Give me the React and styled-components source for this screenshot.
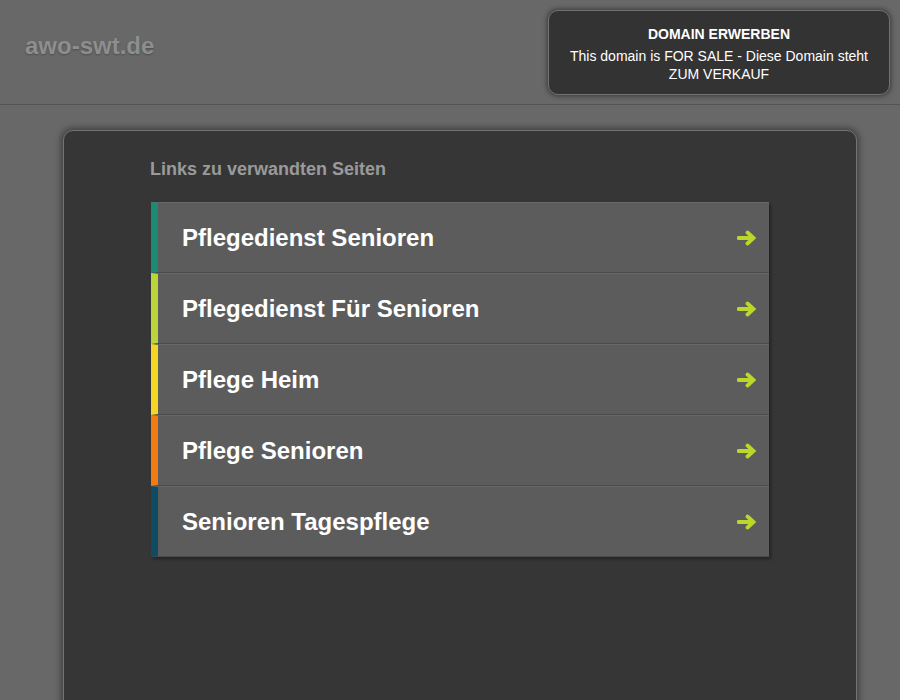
import React from "react";
import styled, { createGlobalStyle } from "styled-components";

const links = [
  { label: "Pflegedienst Senioren", color: "#1b8b73" },
  { label: "Pflegedienst Für Senioren", color: "#b9d53a" },
  { label: "Pflege Heim", color: "#f4d623" },
  { label: "Pflege Senioren", color: "#f27c12" },
  { label: "Senioren Tagespflege", color: "#0f4b62" },
];

const GlobalStyle = createGlobalStyle`
  html, body {
    margin: 0;
    padding: 0;
    background: #686868;
    font-family: "Liberation Sans", Arial, sans-serif;
  }
`;

const Header = styled.header`
  display: flex;
  justify-content: space-between;
  align-items: flex-start;
  height: 105px;
  padding: 10px 10px 0 25px;
  box-sizing: border-box;
  border-bottom: 1px solid #545454;
`;

const Logo = styled.div`
  margin-top: 22px;
  font-size: 24px;
  line-height: 28px;
  font-weight: bold;
  color: #8e8e8e;
  text-shadow: 0 1px 2px rgba(0, 0, 0, 0.25);
`;

const SaleBox = styled.div`
  width: 342px;
  height: 85px;
  box-sizing: border-box;
  padding: 14px 10px 0;
  background: #333334;
  border: 1px solid #727272;
  border-radius: 10px;
  box-shadow: 0 0 5px 1px rgba(0, 0, 0, 0.45);
  text-align: center;
  color: #fff;
  font-size: 14px;
  line-height: 18px;

  h2 {
    margin: 0 0 4px;
    font-size: 14px;
    line-height: 18px;
    font-weight: bold;
  }

  p {
    margin: 0;
  }
`;

const Card = styled.main`
  margin: 25px 43px 0 63px;
  min-height: 600px;
  box-sizing: border-box;
  padding: 28px 87px 40px;
  background: #363637;
  border: 1px solid #747474;
  border-radius: 10px;
  box-shadow: 0 0 6px 2px rgba(0, 0, 0, 0.4);
`;

const Heading = styled.h3`
  margin: 0 0 22px -1px;
  font-size: 18px;
  line-height: 21px;
  font-weight: bold;
  color: #9a9a9a;
`;

const List = styled.ul`
  list-style: none;
  margin: 0;
  padding: 0;
  box-shadow: 2px 2px 3px rgba(0, 0, 0, 0.35);
`;

const Item = styled.li`
  display: flex;
  align-items: center;
  justify-content: space-between;
  height: 71px;
  box-sizing: border-box;
  padding: 0 12px 0 24px;
  background: #5c5c5d;
  border-left: 7px solid ${(p) => p.$bar};
  border-top: 1px solid #686868;
  border-bottom: 1px solid #4b4b4b;
  color: #fff;
  font-size: 24px;
  font-weight: bold;
  cursor: pointer;
`;

const Arrow = () => (
  <svg width="20" height="16" viewBox="0 0 20 16">
    <path
      d="M1.5 8 H15.5 M10.5 2.5 L16.5 8 L10.5 13.5"
      fill="none"
      stroke="#bcd62c"
      strokeWidth="3.8"
      strokeLinecap="round"
      strokeLinejoin="miter"
    />
  </svg>
);

const App = () => (
  <>
    <GlobalStyle />
    <Header>
      <Logo>awo-swt.de</Logo>
      <SaleBox>
        <h2>DOMAIN ERWERBEN</h2>
        <p>This domain is FOR SALE - Diese Domain steht ZUM VERKAUF</p>
      </SaleBox>
    </Header>
    <Card>
      <Heading>Links zu verwandten Seiten</Heading>
      <List>
        {links.map((l) => (
          <Item key={l.label} $bar={l.color}>
            {l.label}
            <Arrow />
          </Item>
        ))}
      </List>
    </Card>
  </>
);

export default App;
